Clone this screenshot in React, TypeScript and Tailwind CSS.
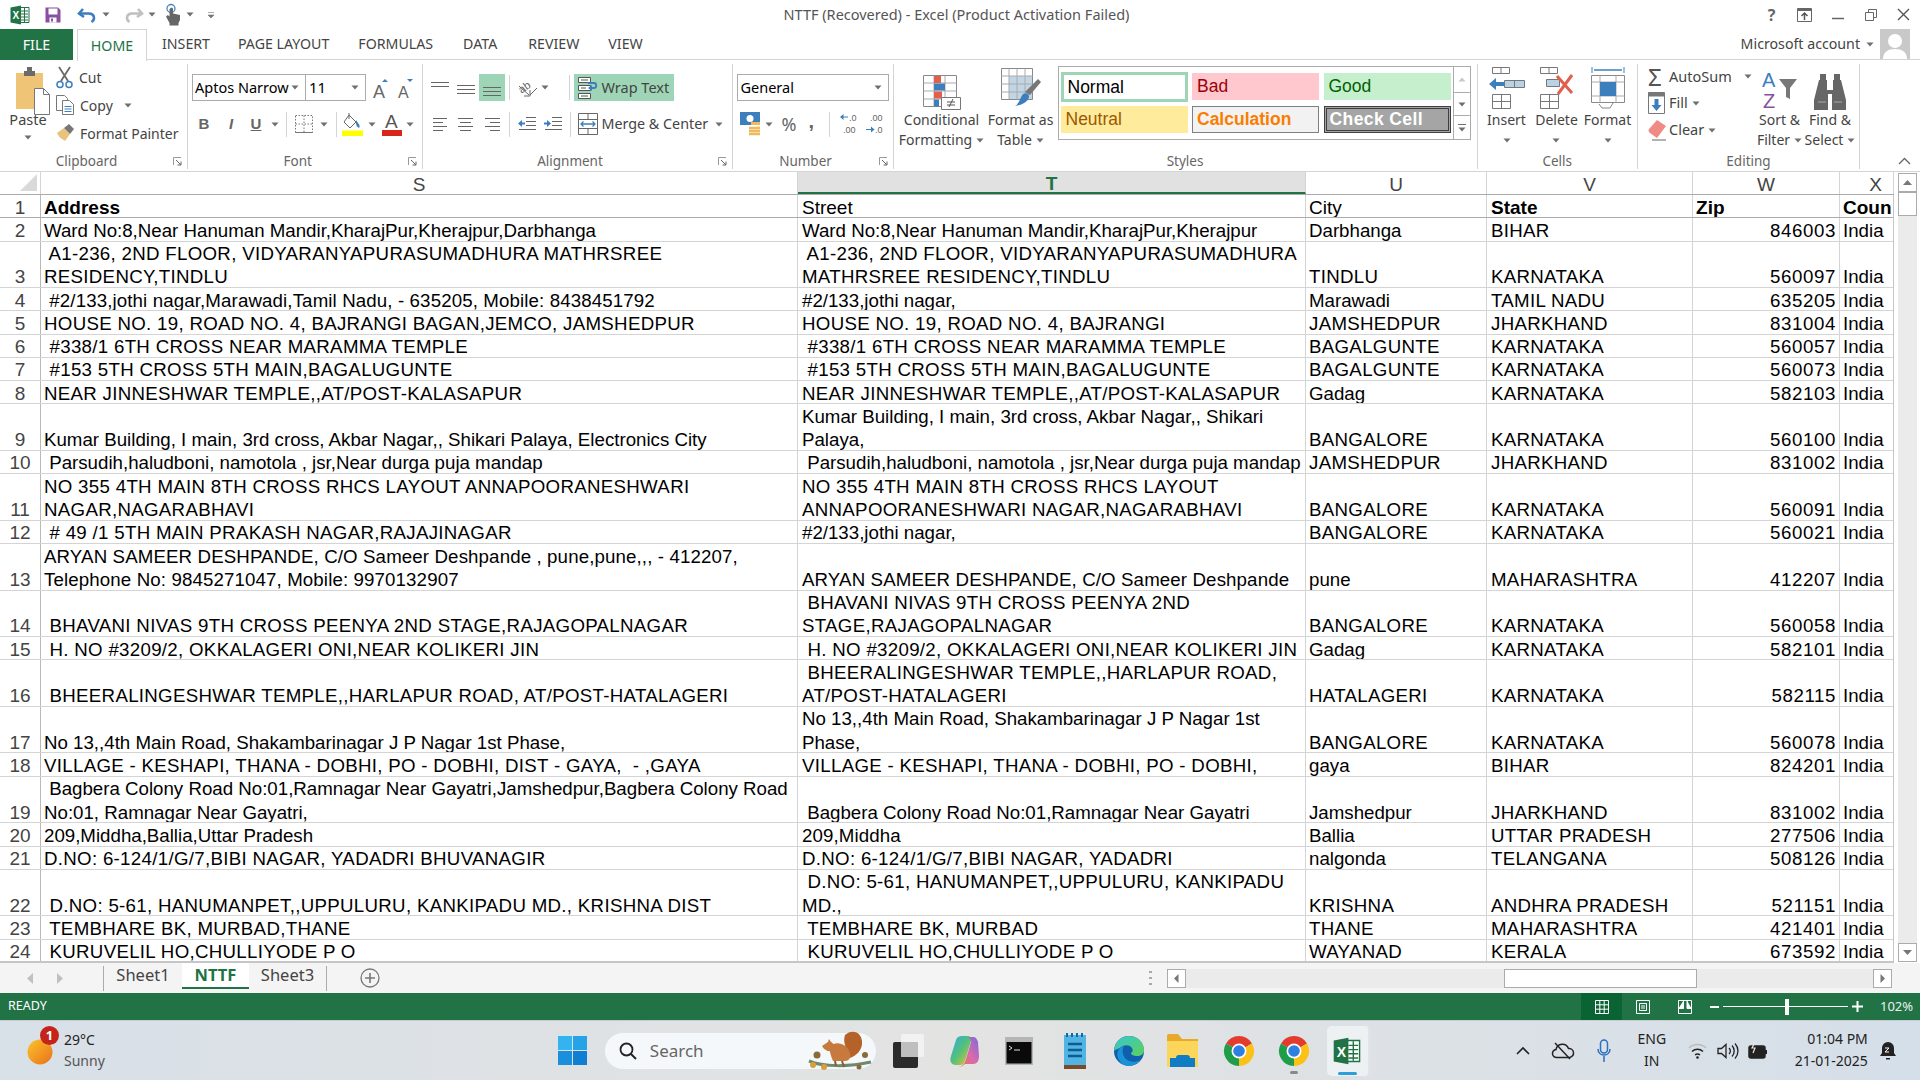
import type { ReactNode } from "react";

const UI = "font-['Noto_Sans',sans-serif]";
const CELL = "font-['Liberation_Sans',Arial,sans-serif]";

const Svg = ({ w, h = w, vb, className = "", children }: { w: number; h?: number; vb?: string; className?: string; children: ReactNode }) => (
  <svg width={w} height={h} viewBox={vb ?? `0 0 ${w} ${h}`} className={`shrink-0 overflow-visible ${className}`} fill="none">
    {children}
  </svg>
);

const Caret = ({ className = "" }: { className?: string }) => (
  <Svg w={8} h={5} className={className}>
    <path d="M0.5 0.5h7L4 4.5z" fill="#6f6f6f" />
  </Svg>
);

const Launcher = () => (
  <Svg w={9} h={9}>
    <path d="M0.5 8V0.5H8" stroke="#999" />
    <path d="M3 3l5 5M8 4.5V8H4.5" stroke="#666" />
  </Svg>
);

const Lines = ({ rows, w = 18, color = "#666" }: { rows: [number, number, number][]; w?: number; color?: string }) => (
  <Svg w={w} h={18}>
    {rows.map(([y, x, l], i) => (
      <path key={i} d={`M${x} ${y + 0.5}h${l}`} stroke={color} />
    ))}
  </Svg>
);

/* ---------- title bar icons ---------- */
const ExcelLogo = ({ size = 20 }: { size?: number }) => (
  <Svg w={size} vb="0 0 20 20">
    <path d="M8 2.5h11v15H8z" fill="#fff" stroke="#217346" />
    <path d="M11 6h7M11 9h7M11 12h7M11 15h7M14.5 3v14" stroke="#217346" />
    <path d="M0.5 2.5L11 .5v19L.5 17.5z" fill="#217346" />
    <text x="2.6" y="14" fontSize="10" fontWeight="700" fill="#fff" fontFamily="Liberation Sans">X</text>
  </Svg>
);
const SaveIcon = () => (
  <Svg w={16}>
    <path d="M.5.5h12.5l2.5 2.5v12.5H.5z" fill="#8a4f9e" />
    <path d="M3.5 1.5h9v6h-9z" fill="#fff" />
    <path d="M4.5 10.5h7v5h-7z" fill="#fff" />
    <path d="M6 11.5h2v3H6z" fill="#8a4f9e" />
  </Svg>
);
const UndoIcon = ({ color, className = "" }: { color: string; className?: string }) => (
  <Svg w={20} h={18} className={className}>
    <path d="M6 3L2 7.5 7 11" stroke={color} strokeWidth="2.6" />
    <path d="M3 7.5h8.5c3.6 0 5.5 2 5.5 4.5 0 1.500-.8 3-2.500 4" stroke={color} strokeWidth="2.6" />
  </Svg>
);
const TouchIcon = () => (
  <Svg w={16} h={22}>
    <circle cx="6" cy="4.500" r="4" stroke="#4a86c0" strokeWidth="1.300" />
    <path d="M4.500 5v7.500L2.800 11 1 12.500l3.500 6.500v2.500h9V19l1.500-3v-5l-7-1.500V5c0-1.800-3-1.800-3 0z" fill="#666" />
  </Svg>
);

/* ---------- clipboard ---------- */
const PasteIcon = () => (
  <Svg w={35} h={48}>
    <path d="M1 6h27v36H1z" fill="#efc477" />
    <path d="M9 4h11v5H9z" fill="#6b6b6b" />
    <path d="M12 0h5v5h-5z" fill="#6b6b6b" />
    <path d="M19.500 21.500h9l6 6v20h-15z" fill="#fff" stroke="#777" />
    <path d="M28.500 21.500v6h6" stroke="#777" />
  </Svg>
);
const CutIcon = () => (
  <Svg w={17} h={23}>
    <path d="M3 1l9 14M14 1L5 15" stroke="#6a6a6a" strokeWidth="1.800" />
    <circle cx="4" cy="18.500" r="3" stroke="#3d7ebd" strokeWidth="1.500" />
    <circle cx="13" cy="18.500" r="3" stroke="#3d7ebd" strokeWidth="1.500" />
  </Svg>
);
const CopyIcon = () => (
  <Svg w={18} h={20}>
    <path d="M.5.5h8l3 3v12H.5z" fill="#fff" stroke="#777" />
    <path d="M6.500 5.500h7l4 4v10h-11z" fill="#fff" stroke="#777" />
    <path d="M8.500 11.500h7M8.500 14h7M8.500 16.500h7" stroke="#3d7ebd" />
  </Svg>
);
const BrushIcon = () => (
  <Svg w={18} h={18}>
    <path d="M1 9l7-5 6 6-5 7c-2-2-5-2-8-8z" fill="#e9c27c" />
    <path d="M8 4l5-4 5 5-4 5z" fill="#777" />
  </Svg>
);

/* ---------- alignment ---------- */
const BordersIcon = () => (
  <Svg w={18}>
    <path d="M.5.5h17v17H.5zM9 .5v17M.5 9h17" stroke="#777" strokeDasharray="1.500 1.500" />
    <path d="M.5 17.500h17" stroke="#777" />
  </Svg>
);
const FillIcon = () => (
  <Svg w={21} h={24}>
    <path d="M7 3l7 7-6 6-6-6z" fill="#fff" stroke="#666" />
    <path d="M7 1v6" stroke="#666" />
    <path d="M14 8l2 3c2 2 2 4 1 5-2-1-3-3-3-5z" fill="#3d7ebd" />
    <path d="M0 18.500h21V24H0z" fill="#ffff00" />
  </Svg>
);
const FontColorIcon = () => (
  <Svg w={20} h={24}>
    <text x="3" y="16" fontSize="19" fontFamily="Liberation Sans" fill="#555">A</text>
    <path d="M0 18h20v6H0z" fill="#d8261c" />
  </Svg>
);
const GrowA = ({ up }: { up: boolean }) => (
  <Svg w={18} h={22}>
    <text x="1" y={21} fontSize={up ? 18 : 16} fontFamily="Liberation Sans" fill="#666">A</text>
    <path d={up ? "M10 5l3-3 3 3z" : "M10 2h6l-3 3z"} fill="#3d7ebd" />
  </Svg>
);
const Orientation = () => (
  <Svg w={20} h={20}>
    <path d="M1 8l10 9M6 18l6 0 0-6" stroke="#666" />
    <text x="1" y="12" fontSize="11" fontFamily="Liberation Sans" fill="#666" transform="rotate(-35 8 10)">ab</text>
    <path d="M12 17l7-7" stroke="#666" />
  </Svg>
);
const Indent = ({ rev }: { rev?: boolean }) => (
  <Svg w={18} h={14}>
    <path d="M8 .5h10M8 4.500h10M8 8.500h10M1 12.500h17" stroke="#666" />
    <path d={rev ? "M0 6.500l4-3.500v2.500h3v2H4V10z" : "M7 6.500L3 3v2.500H0v2h3V10z"} fill="#3d7ebd" />
  </Svg>
);
const WrapIcon = () => (
  <Svg w={20} h={22}>
    <path d="M.5.5h12v5H.5zM.5 8.500h12v5H.5zM.5 16.500h12v5H.5z" fill="#fff" stroke="#555" />
    <path d="M3 3h7M3 11h5M3 19h7" stroke="#555" />
    <path d="M10 6h6c3 0 3 5 0 5h-4" stroke="#3d7ebd" strokeWidth="1.800" />
    <path d="M14 8l-4 3 4 3z" fill="#3d7ebd" />
  </Svg>
);
const MergeIcon = () => (
  <Svg w={20} h={22}>
    <path d="M.5.5h19v21H.5zM.5 6.500h19M.5 15.500h19M10 .5v6M10 15.500v6" stroke="#666" fill="#fff" />
    <path d="M3 11h14M5.500 8.500L3 11l2.500 2.500M14.500 8.500L17 11l-2.500 2.500" stroke="#3d7ebd" strokeWidth="1.300" />
  </Svg>
);

/* ---------- number ---------- */
const MoneyIcon = () => (
  <Svg w={20} h={24}>
    <path d="M0 0h20v13H0z" fill="#3d7ebd" />
    <circle cx="10" cy="6.500" r="3.500" fill="#fff" />
    <path d="M9 16h11M9 19h11M9 22h11" stroke="#efb95c" strokeWidth="2.400" />
    <path d="M11 10h9v3h-9z" fill="#efb95c" />
  </Svg>
);
const DecIcon = ({ rev }: { rev?: boolean }) => (
  <Svg w={17} h={22}>
    {rev ? (
      <>
        <text x="4" y="8" fontSize="9" fontFamily="Liberation Sans" fill="#666">.00</text>
        <text x="9" y="20" fontSize="9" fontFamily="Liberation Sans" fill="#666">.0</text>
        <path d="M0 16h5v-2.500l3.500 3-3.500 3V17H0z" fill="#3d7ebd" />
      </>
    ) : (
      <>
        <text x="9" y="8" fontSize="9" fontFamily="Liberation Sans" fill="#666">.0</text>
        <text x="3" y="20" fontSize="9" fontFamily="Liberation Sans" fill="#666">.00</text>
        <path d="M8 3.500H3.500V1L0 4l3.500 3V4.500H8z" fill="#3d7ebd" />
      </>
    )}
  </Svg>
);

/* ---------- styles ---------- */
const CondFormat = () => (
  <Svg w={38} h={36}>
    <path d="M.5 1.500h33v31H.5z" fill="#fff" stroke="#888" />
    <path d="M11 1.500v31M22 1.500v31M.5 9h33M.5 17h33M.5 25h33" stroke="#aaa" />
    <path d="M11 2h7v7h-7z" fill="#e0604d" />
    <path d="M11 9.500h11v7H11z" fill="#3d7ebd" />
    <path d="M11 17.500h8v7h-8z" fill="#e0604d" />
    <path d="M11 25.500h5v7h-5z" fill="#3d7ebd" />
    <path d="M18.500 23.500h19v12h-19z" fill="#fff" stroke="#777" />
    <path d="M24 31h8M24 28h8M26 33l4-8" stroke="#555" />
  </Svg>
);
const FormatTable = () => (
  <Svg w={40} h={42}>
    <path d="M.5.5h31v31H.5z" fill="#fff" stroke="#888" />
    <path d="M8 8h23v23H8z" fill="#c0d6e6" />
    <path d="M8 .5v31M16 .5v31M24 .5v31M.5 8h31M.5 16h31M.5 24h31" stroke="#aaa" />
    <path d="M37 11l3 3-11 13-5-3z" fill="#777" />
    <path d="M22 26c4-2 6 0 6 3-1 5-7 8-14 9 4-2 5-8 8-12z" fill="#3d7ebd" />
  </Svg>
);

/* ---------- cells / editing ---------- */
const InsertIcon = () => (
  <Svg w={36} h={44}>
    <path d="M3.500 1.500h17v6h-17zM12 1.500v6" stroke="#777" />
    <path d="M16.500 14.500h20v7h-20zM26.500 14.500v7" transform="translate(-1 0)" fill="#b9d3e6" stroke="#777" />
    <path d="M0 18l7-6v4h8v4H7v4z" fill="#3d7ebd" />
    <path d="M3.500 28.500h18v14h-18zM12.500 28.500v14M3.500 35.500h18" stroke="#777" />
  </Svg>
);
const DeleteIcon = () => (
  <Svg w={36} h={44}>
    <path d="M1.500 1.500h17v6h-17zM10 1.500v6" stroke="#777" />
    <path d="M7.500 13.500h13v7h-13z" fill="#b9d3e6" stroke="#777" />
    <path d="M18 10l15 17M33 9L19 28" stroke="#e0604d" strokeWidth="3" />
    <path d="M1.500 28.500h18v14h-18zM10.500 28.500v14M1.500 35.500h18" stroke="#777" />
  </Svg>
);
const FormatIcon = () => (
  <Svg w={34} h={44}>
    <path d="M1 1v6M33 1v6" stroke="#3d7ebd" />
    <path d="M3 4h28" stroke="#3d7ebd" strokeWidth="1.500" />
    <path d="M.5 9.500h33v27H.5z" fill="#fff" stroke="#888" />
    <path d="M9 9.500v27M25 9.500v27M.5 16h33M.5 30h33" stroke="#aaa" />
    <path d="M9 16h16v14H9z" fill="#3d7ebd" />
    <path d="M8 38l3 4h8l3-5" stroke="#888" />
  </Svg>
);
const SortFilter = () => (
  <Svg w={36} h={40}>
    <text x="0" y="17" fontSize="20" fontFamily="Liberation Sans" fill="#3d7ebd">A</text>
    <text x="1" y="38" fontSize="20" fontFamily="Liberation Sans" fill="#8a4f9e">Z</text>
    <path d="M17 9h18l-7 9v11l-4-2v-9z" fill="#777" />
  </Svg>
);
const Binoculars = () => (
  <Svg w={34} h={36}>
    <path d="M7 0h6v6h1v10h6V6h1V0h6v6h1l5 20v10H19V20h-4v16H1V26L6 6h1z" fill="#666" />
    <path d="M5 28h8M21 28h8" stroke="#aaa" />
  </Svg>
);
const ClearIcon = () => (
  <Svg w={20} h={22}>
    <path d="M9 1l9 6-9 12-7-5c-2-2-2-3 0-5z" fill="#ef8a85" />
    <path d="M4 21h14" stroke="#666" />
  </Svg>
);
const FillDown = () => (
  <Svg w={17} h={22}>
    <path d="M.5.5h16v21H.5z" fill="#fff" stroke="#777" />
    <path d="M.5.5h16v4H.5z" fill="#777" />
    <path d="M6.500 7h4v6h3l-5 6-5-6h3z" fill="#3d7ebd" />
  </Svg>
);

/* ---------- status / taskbar ---------- */
const SunIcon = () => (
  <Svg w={26} h={26}>
    <defs>
      <linearGradient id="sun" x1="0" y1="0" x2="1" y2="1">
        <stop offset="0" stopColor="#fbc42c" />
        <stop offset="1" stopColor="#e9701a" />
      </linearGradient>
    </defs>
    <circle cx="13" cy="13" r="12.500" fill="url(#sun)" />
  </Svg>
);
const WinLogo = () => (
  <Svg w={29}>
    <path d="M0 0h14v14H0z" fill="#33b4ee" />
    <path d="M15 0h14v14H15z" fill="#25a3e6" />
    <path d="M0 15h14v14H0z" fill="#1a8fdc" />
    <path d="M15 15h14v14H15z" fill="#0f7fd3" />
  </Svg>
);
const Squirrel = () => (
  <Svg w={64} h={40}>
    <path d="M0 30c14 6 40 6 62 1" stroke="#6e8a6a" strokeWidth="3" />
    <path d="M36 4c6-6 16-4 17 6 1 9-6 15-12 17-2-8-8-14-5-23z" fill="#b5622a" />
    <path d="M20 16c6-7 18-4 21 6 1 5-1 8-5 8H24c-2-4-3-9-4-14z" fill="#c77a3d" />
    <path d="M13 15l6-4 1-3 2 3c3 1 4 6 1 9-4 1-8-1-10-5z" fill="#c77a3d" />
    <path d="M26 30l1 5M33 30l2 6" stroke="#8a5a33" strokeWidth="2" />
    <circle cx="8" cy="24" r="3.500" fill="#8a6a3a" />
    <circle cx="4" cy="34" r="3" fill="#d8a03c" />
    <circle cx="15" cy="36" r="3" fill="#d8a03c" />
    <circle cx="56" cy="24" r="3" fill="#8a6a3a" />
    <circle cx="50" cy="36" r="2.500" fill="#8a6a3a" />
  </Svg>
);
const TaskView = () => (
  <Svg w={32} h={34}>
    <path d="M0 10a2 2 0 012-2h21a2 2 0 012 2v22a2 2 0 01-2 2H2a2 2 0 01-2-2z" fill="#2b2b2b" />
    <rect x="8" y="0" width="23" height="23" rx="2" fill="#f4f4f4" fillOpacity="0.85" />
    <rect x="8" y="8" width="17" height="15" fill="#bdbdbd" fillOpacity="0.9" />
  </Svg>
);
const Copilot = () => (
  <Svg w={30} h={34}>
    <defs>
      <linearGradient id="cpA" x1="0" y1="0" x2="1" y2="1">
        <stop offset="0" stopColor="#2fa8e6" />
        <stop offset="0.5" stopColor="#53c17a" />
        <stop offset="1" stopColor="#f6c12c" />
      </linearGradient>
      <linearGradient id="cpB" x1="1" y1="0" x2="0" y2="1">
        <stop offset="0" stopColor="#7a6ad8" />
        <stop offset="0.5" stopColor="#d76bb0" />
        <stop offset="1" stopColor="#f2703c" />
      </linearGradient>
    </defs>
    <path d="M12 2c-3 0-5 1-6 4L1 22c-2 6 1 9 5 9h4c3 0 4-2 5-4l6-20c1-3-1-5-4-5z" fill="url(#cpA)" />
    <path d="M18 3h5c3 0 4 2 5 5l1 14c0 5-2 8-6 8h-8c-2 2-4 3-6 3 4-1 6-4 7-8l5-17c0-2-1-4-3-5z" fill="url(#cpB)" />
  </Svg>
);
const Terminal = () => (
  <Svg w={28} h={28}>
    <path d="M0 0h28v28H0z" fill="#b5b5b5" />
    <path d="M1.500 5h25v21.500h-25z" fill="#0a0a0a" />
    <path d="M4 9l3 2-3 2M9 13h6" stroke="#ddd" strokeWidth="1" />
  </Svg>
);
const Notepad = () => (
  <Svg w={22} h={36}>
    <path d="M0 2h22v30H0z" fill="#52b4e2" />
    <path d="M0 32h22v4H0z" fill="#7a4a2a" />
    <path d="M3 0v4M8 0v4M13 0v4M18 0v4" stroke="#0f6ba8" strokeWidth="2" />
    <path d="M4 11h14M4 17h14M4 23h14" stroke="#0d5d92" strokeWidth="2.500" />
  </Svg>
);
const Edge = () => (
  <Svg w={30} h={36} vb="0 0 30 30">
    <defs>
      <linearGradient id="edA" x1="0" y1="0" x2="1" y2="1">
        <stop offset="0" stopColor="#37c6d0" />
        <stop offset="1" stopColor="#5ed15a" />
      </linearGradient>
    </defs>
    <circle cx="15" cy="15" r="15" fill="#0f5fae" />
    <path d="M0 15C1 5 8 0 15 0c9 0 15 6 15 14 0 4-3 6-7 6-3 0-6-1-6-3 2-1 2-3 1-5-3-4-9-3-12 0-3 1-5 2-6 3z" fill="url(#edA)" />
    <path d="M4 22c-2-6 1-11 6-12-2 3-2 9 2 13 3 3 9 4 14 1-3 4-7 6-11 6-5 0-9-3-11-8z" fill="#1a93d6" />
  </Svg>
);
const Folder = () => (
  <Svg w={31} h={33}>
    <path d="M0 2a2 2 0 012-2h9l4 5h16v28H0z" fill="#e8a82a" />
    <path d="M0 7h31v26H0z" fill="#fbd65a" />
    <path d="M9 24c0-2 1-3 3-3h8c2 0 3 1 3 3h5v9H3v-9z" fill="#0f7cc4" />
  </Svg>
);
const Chrome = ({ size = 30 }: { size?: number }) => (
  <Svg w={size} vb="0 0 30 30">
    <path d="M15 15L2 7.500A15 15 0 0128 7.500z" fill="#e33b2e" />
    <path d="M15 15L28 7.500A15 15 0 0115 30z" fill="#fbc116" />
    <path d="M15 15L15 30A15 15 0 012 7.500z" fill="#1e9e4a" />
    <circle cx="15" cy="15" r="7.500" fill="#fff" />
    <circle cx="15" cy="15" r="5.800" fill="#2f7fe3" />
  </Svg>
);

/* ---------- sheet data ---------- */
const rows: string[][] = [
  ["1", "Address", "Street", "City", "State", "Zip", "Coun"],
  ["2", "Ward No:8,Near Hanuman Mandir,KharajPur,Kherajpur,Darbhanga", "Ward No:8,Near Hanuman Mandir,KharajPur,Kherajpur", "Darbhanga", "BIHAR", "846003", "India"],
  ["3", " A1-236, 2ND FLOOR, VIDYARANYAPURASUMADHURA MATHRSREE\nRESIDENCY,TINDLU", " A1-236, 2ND FLOOR, VIDYARANYAPURASUMADHURA\nMATHRSREE RESIDENCY,TINDLU", "TINDLU", "KARNATAKA", "560097", "India"],
  ["4", " #2/133,jothi nagar,Marawadi,Tamil Nadu, - 635205, Mobile: 8438451792", "#2/133,jothi nagar,", "Marawadi", "TAMIL NADU", "635205", "India"],
  ["5", "HOUSE NO. 19, ROAD NO. 4, BAJRANGI BAGAN,JEMCO, JAMSHEDPUR", "HOUSE NO. 19, ROAD NO. 4, BAJRANGI", "JAMSHEDPUR", "JHARKHAND", "831004", "India"],
  ["6", " #338/1 6TH CROSS NEAR MARAMMA TEMPLE", " #338/1 6TH CROSS NEAR MARAMMA TEMPLE", "BAGALGUNTE", "KARNATAKA", "560057", "India"],
  ["7", " #153 5TH CROSS 5TH MAIN,BAGALUGUNTE", " #153 5TH CROSS 5TH MAIN,BAGALUGUNTE", "BAGALGUNTE", "KARNATAKA", "560073", "India"],
  ["8", "NEAR JINNESHWAR TEMPLE,,AT/POST-KALASAPUR", "NEAR JINNESHWAR TEMPLE,,AT/POST-KALASAPUR", "Gadag", "KARNATAKA", "582103", "India"],
  ["9", "Kumar Building, I main, 3rd cross, Akbar Nagar,, Shikari Palaya, Electronics City", "Kumar Building, I main, 3rd cross, Akbar Nagar,, Shikari\nPalaya,", "BANGALORE", "KARNATAKA", "560100", "India"],
  ["10", " Parsudih,haludboni, namotola , jsr,Near durga puja mandap", " Parsudih,haludboni, namotola , jsr,Near durga puja mandap", "JAMSHEDPUR", "JHARKHAND", "831002", "India"],
  ["11", "NO 355 4TH MAIN 8TH CROSS RHCS LAYOUT ANNAPOORANESHWARI\nNAGAR,NAGARABHAVI", "NO 355 4TH MAIN 8TH CROSS RHCS LAYOUT\nANNAPOORANESHWARI NAGAR,NAGARABHAVI", "BANGALORE", "KARNATAKA", "560091", "India"],
  ["12", " # 49 /1 5TH MAIN PRAKASH NAGAR,RAJAJINAGAR", "#2/133,jothi nagar,", "BANGALORE", "KARNATAKA", "560021", "India"],
  ["13", "ARYAN SAMEER DESHPANDE, C/O Sameer Deshpande , pune,pune,,, - 412207,\nTelephone No: 9845271047, Mobile: 9970132907", "ARYAN SAMEER DESHPANDE, C/O Sameer Deshpande", "pune", "MAHARASHTRA", "412207", "India"],
  ["14", " BHAVANI NIVAS 9TH CROSS PEENYA 2ND STAGE,RAJAGOPALNAGAR", " BHAVANI NIVAS 9TH CROSS PEENYA 2ND\nSTAGE,RAJAGOPALNAGAR", "BANGALORE", "KARNATAKA", "560058", "India"],
  ["15", " H. NO #3209/2, OKKALAGERI ONI,NEAR KOLIKERI JIN", " H. NO #3209/2, OKKALAGERI ONI,NEAR KOLIKERI JIN", "Gadag", "KARNATAKA", "582101", "India"],
  ["16", " BHEERALINGESHWAR TEMPLE,,HARLAPUR ROAD, AT/POST-HATALAGERI", " BHEERALINGESHWAR TEMPLE,,HARLAPUR ROAD,\nAT/POST-HATALAGERI", "HATALAGERI", "KARNATAKA", "582115", "India"],
  ["17", "No 13,,4th Main Road, Shakambarinagar J P Nagar 1st Phase,", "No 13,,4th Main Road, Shakambarinagar J P Nagar 1st\nPhase,", "BANGALORE", "KARNATAKA", "560078", "India"],
  ["18", "VILLAGE - KESHAPI, THANA - DOBHI, PO - DOBHI, DIST - GAYA,  - ,GAYA", "VILLAGE - KESHAPI, THANA - DOBHI, PO - DOBHI,", "gaya", "BIHAR", "824201", "India"],
  ["19", " Bagbera Colony Road No:01,Ramnagar Near Gayatri,Jamshedpur,Bagbera Colony Road\nNo:01, Ramnagar Near Gayatri,", " Bagbera Colony Road No:01,Ramnagar Near Gayatri", "Jamshedpur", "JHARKHAND", "831002", "India"],
  ["20", "209,Middha,Ballia,Uttar Pradesh", "209,Middha", "Ballia", "UTTAR PRADESH", "277506", "India"],
  ["21", "D.NO: 6-124/1/G/7,BIBI NAGAR, YADADRI BHUVANAGIR", "D.NO: 6-124/1/G/7,BIBI NAGAR, YADADRI", "nalgonda", "TELANGANA", "508126", "India"],
  ["22", " D.NO: 5-61, HANUMANPET,,UPPULURU, KANKIPADU MD., KRISHNA DIST", " D.NO: 5-61, HANUMANPET,,UPPULURU, KANKIPADU\nMD.,", "KRISHNA", "ANDHRA PRADESH", "521151", "India"],
  ["23", " TEMBHARE BK, MURBAD,THANE", " TEMBHARE BK, MURBAD", "THANE", "MAHARASHTRA", "421401", "India"],
  ["24", " KURUVELIL HO,CHULLIYODE P O", " KURUVELIL HO,CHULLIYODE P O", "WAYANAD", "KERALA", "673592", "India"],
];

// caps and digits came out wider than lowercase in the picture
const tracking = (line: string) => {
  const t = line.replace(/\s/g, "");
  if (/^\d+$/.test(t)) return "tracking-[0.6px]";
  const upper = (t.match(/[A-Z0-9]/g) ?? []).length / (t.length || 1);
  if (upper > 0.7) return "tracking-[0.3px]";
  if (upper > 0.3) return "tracking-[0.12px]";
  return "";
};

const Cell = ({ width, text, className = "" }: { width: string; text: string; className?: string }) => (
  <div className={`${width} shrink-0 flex items-end overflow-hidden border-r border-[#d4d4d4] px-[3px] whitespace-pre ${className}`}>
    <div className="-mb-[1.500px]">
      {text.split("\n").map((line, i) => (
        <div key={i} className={tracking(line)}>{line}</div>
      ))}
    </div>
  </div>
);

const SheetRow = ({ row }: { row: string[] }) => {
  const [num, s, t, u, v, w, x] = row;
  const tall = s.includes("\n") || t.includes("\n");
  const head = num === "1";
  const bold = head ? "font-bold" : "";
  return (
    <div className={`flex shrink-0 border-b ${head ? "border-[#ababab] text-[19px]" : "border-[#d4d4d4]"} ${tall ? "h-[46.55px]" : "h-[23.27px]"}`}>
      <div className="w-[41px] shrink-0 flex items-end justify-center overflow-hidden border-r border-[#b9b9b9] text-[19px] text-[#444]">
        <span className="-mb-[1.500px]">{num}</span>
      </div>
      <Cell width="w-[757px]" className={bold} text={s} />
      <Cell width="w-[508px]" className="pl-[4px]" text={t} />
      <Cell width="w-[181px]" text={u} />
      <Cell width="w-[206px]" className={`pl-[4px] ${bold}`} text={v} />
      <Cell width={`w-[147px] ${head ? "" : "justify-end"}`} className={bold} text={w} />
      <Cell width="w-[54px]" className={bold} text={x} />
    </div>
  );
};

const ColHead = ({ width, label, active, className = "" }: { width: string; label: string; active?: boolean; className?: string }) => (
  <div
    className={`${width} shrink-0 flex items-center justify-center pt-[3px] border-r border-[#d4d4d4] ${className} ${
      active ? "bg-[#e1e1e1] text-[#217346] font-bold border-b-2 border-b-[#217346]" : "text-[#444]"
    }`}
  >
    {label}
  </div>
);

/* ---------- ribbon bits ---------- */
const Group = ({ width, label, launcher, children }: { width: string; label: string; launcher?: boolean; children: ReactNode }) => (
  <div className={`${width} shrink-0 flex flex-col h-[105px] mt-[4px] border-r border-[#d4d4d4]`}>
    <div className="flex-1 min-h-0">{children}</div>
    <div className="h-[16px] flex items-center text-[#666] text-[13.5px]">
      <span className="flex-1 text-center">{label}</span>
      {launcher ? <span className="mr-[5px] flex"><Launcher /></span> : null}
    </div>
  </div>
);

const BigButton = ({ width, icon, lines, className = "" }: { width: string; icon: ReactNode; lines: ReactNode[]; className?: string }) => (
  <div className={`${width} shrink-0 flex flex-col items-center ${className}`}>
    <div className="h-[44px] flex items-end justify-center">{icon}</div>
    <div className="text-[14px] leading-[20px] text-center whitespace-nowrap text-[#444]">
      {lines.map((l, i) => (
        <div key={i} className="flex items-center justify-center gap-[4px] h-[20px]">{l}</div>
      ))}
    </div>
  </div>
);

const VSep = ({ h = "h-[25px]", className = "" }: { h?: string; className?: string }) => <span className={`w-px ${h} bg-[#d4d4d4] shrink-0 ${className}`} />;

const Ribbon = () => (
  <div className={`h-[112px] flex border-b border-[#d4d4d4] text-[#444] ${UI}`}>
    <Group width="w-[188px]" label="Clipboard" launcher>
      <div className="flex pt-[3px]">
        <div className="w-[56px] flex flex-col items-center">
          <span className="ml-[8px] flex"><PasteIcon /></span>
          <span className="text-[14.5px] leading-[20px] -mt-[6px]">Paste</span>
          <Caret className="mt-[6px]" />
        </div>
        <div className="flex flex-col text-[14px] -mt-[4px]">
          <div className="h-[28px] flex items-center gap-[6px]"><CutIcon /><span>Cut</span></div>
          <div className="h-[28px] flex items-center gap-[6px]"><CopyIcon /><span>Copy</span><Caret className="ml-[5px]" /></div>
          <div className="h-[28px] flex items-center gap-[6px]"><BrushIcon /><span>Format Painter</span></div>
        </div>
      </div>
    </Group>

    <Group width="w-[234.500px]" label="Font" launcher>
      <div className="pt-[10px] pl-[4px]">
        <div className="flex items-center">
          <div className="w-[114px] h-[27px] flex items-center justify-between border border-[#ababab] pl-[2px] pr-[6px] text-[14.5px] text-black whitespace-nowrap">
            <span>Aptos Narrow</span><Caret />
          </div>
          <div className="w-[60px] h-[27px] flex items-center justify-between border border-l-0 border-[#ababab] pl-[3px] pr-[6px] text-[15px] text-black">
            <span>11</span><Caret />
          </div>
          <span className="ml-[6px] flex"><GrowA up /></span>
          <span className="ml-[7px] flex"><GrowA up={false} /></span>
        </div>
        <div className="flex items-center h-[26px] mt-[10px] text-[#666]">
          <span className={`w-[24px] text-center font-bold text-[15px] ${CELL}`}>B</span>
          <span className={`w-[24px] ml-[3px] text-center italic font-bold text-[15px] ${CELL}`}>I</span>
          <span className={`w-[22px] ml-[2px] text-center underline font-bold text-[15px] ${CELL}`}>U</span>
          <Caret className="ml-[4px]" />
          <VSep className="ml-[7px]" />
          <span className="ml-[8px] flex"><BordersIcon /></span>
          <Caret className="ml-[7px]" />
          <VSep className="ml-[8px]" />
          <span className="ml-[5px] flex"><FillIcon /></span>
          <Caret className="ml-[5px]" />
          <span className="ml-[6px] flex"><FontColorIcon /></span>
          <Caret className="ml-[4px]" />
        </div>
      </div>
    </Group>

    <Group width="w-[310px]" label="Alignment" launcher>
      <div className="pt-[10px]">
        <div className="flex items-center h-[27px]">
          <span className="ml-[8px] flex"><Lines rows={[[3, 0, 18], [7, 0, 18]]} /></span>
          <span className="ml-[8px] flex"><Lines rows={[[6, 0, 18], [10, 0, 18], [14, 0, 18]]} /></span>
          <span className="ml-[4px] w-[26px] h-[27px] bg-[#9fd5b7] flex items-center justify-center"><Lines rows={[[8, 0, 18], [12, 0, 18], [16, 0, 18]]} w={18} /></span>
          <VSep className="ml-[4px]" />
          <span className="ml-[8px] flex"><Orientation /></span>
          <Caret className="ml-[3px]" />
          <VSep className="ml-[20px]" />
          <div className="ml-[4px] w-[100px] h-[27px] bg-[#9fd5b7] flex items-center gap-[4px] pl-[4px] text-[14.5px] whitespace-nowrap"><WrapIcon /><span>Wrap Text</span></div>
        </div>
        <div className="flex items-center h-[26px] mt-[10px]">
          <span className="ml-[10px] flex"><Lines rows={[[3, 0, 14], [7, 0, 10], [11, 0, 14], [15, 0, 10]]} w={15} /></span>
          <span className="ml-[10px] flex"><Lines rows={[[3, 0, 15], [7, 2, 11], [11, 0, 15], [15, 2, 11]]} w={15} /></span>
          <span className="ml-[12px] flex"><Lines rows={[[3, 0, 15], [7, 5, 10], [11, 0, 15], [15, 5, 10]]} w={15} /></span>
          <VSep className="ml-[9px]" />
          <span className="ml-[8px] flex"><Indent rev /></span>
          <span className="ml-[8px] flex"><Indent /></span>
          <VSep className="ml-[8px]" />
          <span className="ml-[7px] flex"><MergeIcon /></span>
          <span className="ml-[4px] text-[14.3px] whitespace-nowrap">Merge &amp; Center</span>
          <Caret className="ml-[7px]" />
        </div>
      </div>
    </Group>

    <Group width="w-[161px]" label="Number" launcher>
      <div className="pt-[10px] pl-[4px]">
        <div className="w-[152px] h-[27px] flex items-center justify-between border border-[#ababab] pl-[3px] pr-[6px] text-[14.5px] text-black">
          <span>General</span><Caret />
        </div>
        <div className="flex items-center h-[26px] mt-[10px]">
          <span className="ml-[3px] flex"><MoneyIcon /></span>
          <Caret className="ml-[5px]" />
          <span className="ml-[9px] text-[18px] text-[#666]">%</span>
          <span className={`ml-[12px] text-[20px] font-bold text-[#666] leading-none -mt-[6px] ${CELL}`}>,</span>
          <VSep className="ml-[15px]" />
          <span className="ml-[10px] flex"><DecIcon /></span>
          <span className="ml-[9px] flex"><DecIcon rev /></span>
        </div>
      </div>
    </Group>

    <Group width="w-[584px]" label="Styles">
      <div className="flex items-start pt-[2px]">
        <BigButton width="w-[84px] ml-[6px]" icon={<CondFormat />} lines={["Conditional", <>Formatting <Caret /></>]} />
        <BigButton width="w-[74px]" icon={<FormatTable />} lines={["Format as", <>Table <Caret /></>]} />
        <div className="w-[413px] h-[74px] flex border border-[#ababab]">
          <div className={`w-[394px] grid grid-cols-[127px_127px_127px] gap-x-[4.500px] gap-y-[4px] pl-[2px] pt-[6px] content-start ${CELL} text-[17.500px]`}>
            <div className="h-[30px] -mt-[1px] border-[3px] border-[#9fd5b7] flex items-center pl-[4px] text-black">Normal</div>
            <div className="h-[27px] bg-[#ffc7ce] flex items-center pl-[5px] text-[#9c0006]">Bad</div>
            <div className="h-[27px] bg-[#c6efce] flex items-center pl-[5px] text-[#006100]">Good</div>
            <div className="h-[27px] bg-[#ffeb9c] flex items-center pl-[5px] text-[#9c5700]">Neutral</div>
            <div className="h-[27px] bg-[#f2f2f2] border border-[#7f7f7f] flex items-center pl-[4px] font-bold text-[#fa7d00]">Calculation</div>
            <div className="h-[27px] bg-[#a5a5a5] border-[3px] border-double border-[#3f3f3f] flex items-center pl-[3px] font-bold text-white tracking-[0.4px]">Check Cell</div>
          </div>
          <div className="flex-1 flex flex-col border-l border-[#ababab]">
            <div className="h-[26px] flex items-center justify-center border-b border-[#ababab]"><Svg w={8} h={5}><path d="M0.5 4.500h7L4 .5z" fill="#c8c8c8" /></Svg></div>
            <div className="h-[23px] flex items-center justify-center border-b border-[#ababab]"><Caret /></div>
            <div className="flex-1 flex flex-col items-center justify-center gap-[2px]"><span className="w-[8px] h-px bg-[#6f6f6f]" /><Caret /></div>
          </div>
        </div>
      </div>
    </Group>

    <Group width="w-[160.500px]" label="Cells">
      <div className="flex pt-[2px] pl-[4px]">
        <BigButton width="w-[50px]" icon={<InsertIcon />} lines={["Insert", <Caret />]} />
        <BigButton width="w-[50px]" icon={<DeleteIcon />} lines={["Delete", <Caret />]} />
        <BigButton width="w-[52px]" icon={<FormatIcon />} lines={["Format", <Caret />]} />
      </div>
    </Group>

    <Group width="w-[222px]" label="Editing">
      <div className="flex">
        <div className="w-[114px] pl-[10px] flex flex-col text-[14.5px] -mt-[1px]">
          <div className="h-[27px] flex items-center"><span className="w-[21px] flex text-[24px] leading-none text-[#555]">Σ</span><span>AutoSum</span><Caret className="ml-[12px]" /></div>
          <div className="h-[26px] flex items-center"><span className="w-[21px] flex"><FillDown /></span><span>Fill</span><Caret className="ml-[4px]" /></div>
          <div className="h-[28px] flex items-center"><span className="w-[21px] flex"><ClearIcon /></span><span>Clear</span><Caret className="ml-[4px]" /></div>
        </div>
        <BigButton width="w-[55px]" className="pt-[2px]" icon={<SortFilter />} lines={["Sort &", <>Filter <Caret /></>]} />
        <BigButton width="w-[52px]" className="-ml-[3px] pt-[2px]" icon={<Binoculars />} lines={["Find &", <>Select <Caret /></>]} />
      </div>
    </Group>

    <div className="flex-1 flex items-end justify-end pb-[6px] pr-[9px]">
      <Svg w={13} h={8}><path d="M1 7l5.500-5.500L12 7" stroke="#666" strokeWidth="1.300" /></Svg>
    </div>
  </div>
);

const ScrollBtn = ({ d, className = "" }: { d: string; className?: string }) => (
  <div className={`w-[19px] h-[19px] flex items-center justify-center border border-[#ababab] bg-white shrink-0 ${className}`}>
    <Svg w={9} h={9}><path d={d} fill="#777" /></Svg>
  </div>
);

export default function App() {
  return (
    <div className={`w-[1920px] h-[1080px] flex flex-col overflow-hidden bg-white ${UI}`}>
      {/* Title bar */}
      <div className="h-[29px] flex items-center shrink-0 text-[#444]">
        <span className="ml-[10px] flex"><ExcelLogo /></span>
        <span className="ml-[15px] flex"><SaveIcon /></span>
        <span className="ml-[16px] flex"><UndoIcon color="#3d7ebd" /></span>
        <Caret className="ml-[5px]" />
        <span className="ml-[14px] flex"><UndoIcon color="#c0c0c0" className="-scale-x-100" /></span>
        <Caret className="ml-[4px]" />
        <span className="ml-[9px] flex"><TouchIcon /></span>
        <Caret className="ml-[5px]" />
        <Svg w={8} h={8} className="ml-[13px]"><path d="M1 1.500h6M1 4h6l-3 3z" fill="#777" stroke="#777" strokeWidth=".6" /></Svg>
        <div className="flex-1 text-center text-[14.500px] pr-[57px] text-[#555]">NTTF (Recovered) - Excel (Product Activation Failed)</div>
        <div className="flex items-center text-[#666]">
          <span className="w-[33px] text-center font-bold text-[16px]">?</span>
          <span className="w-[33px] flex justify-center">
            <Svg w={15} h={14}><path d="M.5.5h14v13H.5z" stroke="#666" /><path d="M.5 2h14" stroke="#666" strokeWidth="2" /><path d="M7.500 12V5M4.500 8l3-3 3 3" stroke="#555" strokeWidth="1.500" /></Svg>
          </span>
          <span className="w-[33px] flex justify-center"><Svg w={12} h={12}><path d="M0 9.500h12" stroke="#666" strokeWidth="1.500" /></Svg></span>
          <span className="w-[33px] flex justify-center"><Svg w={12} h={12}><path d="M3.500 3V.5h8v8H9M.5 3.500h8v8h-8z" stroke="#666" /></Svg></span>
          <span className="w-[33px] flex justify-center"><Svg w={13} h={13}><path d="M1 1l11 11M12 1L1 12" stroke="#555" strokeWidth="1.400" /></Svg></span>
        </div>
      </div>

      {/* Tab row */}
      <div className="h-[31px] flex items-stretch shrink-0 text-[#444] text-[14.2px]">
        <div className="w-[73px] bg-[#217346] text-white flex items-center justify-center">FILE</div>
        <div className="ml-[4px] w-[70px] -mb-px relative z-10 bg-white border border-b-0 border-[#d4d4d4] text-[#217346] flex items-center justify-center">HOME</div>
        <div className="flex-1 flex items-center border-b border-[#d4d4d4]">
          <span className="ml-[15px]">INSERT</span>
          <span className="ml-[28px]">PAGE LAYOUT</span>
          <span className="ml-[29px]">FORMULAS</span>
          <span className="ml-[30px]">DATA</span>
          <span className="ml-[31px]">REVIEW</span>
          <span className="ml-[29px]">VIEW</span>
          <span className="ml-auto">Microsoft account</span>
          <Caret className="ml-[6px]" />
          <div className="ml-[6px] mr-[10px] w-[30px] h-[30px] bg-[#c9c9c9] flex items-end justify-center overflow-hidden">
            <Svg w={26} h={28}>
              <circle cx="13" cy="10" r="7" fill="#fff" />
              <path d="M1 28c0-7 5-10 12-10s12 3 12 10z" fill="#fff" />
            </Svg>
          </div>
        </div>
      </div>

      <Ribbon />

      {/* Sheet */}
      <div className={`h-[791px] flex shrink-0 ${CELL} text-[18.700px] leading-[23.27px] text-black`}>
        <div className="w-[1894px] flex flex-col">
          <div className="h-[23px] flex shrink-0 border-b border-[#ababab] text-[19px]">
            <div className="w-[41px] shrink-0 flex items-end justify-end border-r border-[#d4d4d4] pr-[3px] pb-[3px]">
              <Svg w={17} h={17}><path d="M17 0v17H0z" fill="#d9d9d9" /></Svg>
            </div>
            <ColHead width="w-[757px]" label="S" />
            <ColHead width="w-[508px]" label="T" active />
            <ColHead width="w-[181px]" label="U" />
            <ColHead width="w-[206px]" label="V" />
            <ColHead width="w-[147px]" label="W" />
            <ColHead width="w-[54px]" label="X" className="pl-[18px]" />
          </div>
          <div className="flex-1 flex flex-col border-r border-[#c6c6c6] border-b-2 border-b-[#c6c6c6] overflow-hidden">
            {rows.map((r) => (
              <SheetRow key={r[0]} row={r} />
            ))}
          </div>
        </div>
        <div className="flex-1 flex flex-col pl-[4px] pr-[3px] py-[1px]">
          <ScrollBtn d="M0 7l4.500-5L9 7z" />
          <div className="h-[24px] border border-[#ababab] bg-white" />
          <div className="flex-1 bg-[#ebebeb]" />
          <ScrollBtn d="M0 2l4.500 5L9 2z" />
        </div>
      </div>

      {/* Sheet tabs */}
      <div className="h-[30px] shrink-0 flex items-center bg-[#f4f4f4] text-[#444] text-[16.5px]">
        <span className="ml-[27px] flex"><Svg w={7} h={11}><path d="M6 0v11L0 5.500z" fill="#c0c0c0" /></Svg></span>
        <span className="ml-[22px] flex"><Svg w={7} h={11}><path d="M1 0v11l6-5.500z" fill="#c0c0c0" /></Svg></span>
        <span className="ml-[40px] w-px h-[25px] bg-[#ababab]" />
        <span className="w-[78px] text-center pb-[5px]">Sheet1</span>
        <span className="w-[67px] h-[26px] self-start flex items-center justify-center bg-white border-b-2 border-[#217346] text-[#217346] font-bold">NTTF</span>
        <span className="w-[77px] text-center pb-[5px]">Sheet3</span>
        <span className="w-px h-[25px] bg-[#ababab]" />
        <span className="ml-[33px] flex">
          <Svg w={20}><circle cx="10" cy="10" r="9" stroke="#777" strokeWidth="1.300" /><path d="M10 5v10M5 10h10" stroke="#777" strokeWidth="1.600" /></Svg>
        </span>
        <span className="ml-[769px] flex"><Svg w={3} h={14}><path d="M0 0h3v2H0zM0 6h3v2H0zM0 12h3v2H0z" fill="#aaa" /></Svg></span>
        <div className="ml-[15px] w-[725px] flex items-center h-[19px] bg-[#ebebeb]">
          <ScrollBtn d="M6.500 0v9L2 4.500z" />
          <div className="ml-[318px] w-[193px] h-[19px] bg-white border border-[#ababab]" />
          <ScrollBtn d="M2.500 0v9L7 4.500z" className="ml-auto" />
        </div>
      </div>

      {/* Status bar */}
      <div className="h-[27px] shrink-0 flex items-center bg-[#217346] text-white text-[12.5px]">
        <span className="ml-[8px]">READY</span>
        <div className="ml-auto flex items-center h-[27px]">
          <span className="w-[41px] h-[27px] bg-[#0a6332] flex items-center justify-center">
            <Svg w={14}><path d="M.5.5h13v13H.5zM4.800.5v13M9.200.5v13M.5 4.800h13M.5 9.200h13" stroke="#fff" /></Svg>
          </span>
          <span className="w-[41px] flex justify-center">
            <Svg w={14}><path d="M.5.5h13v13H.5z" stroke="#fff" /><path d="M3.500 3.500h7v7h-7zM5 6h4M5 8h4" stroke="#fff" /></Svg>
          </span>
          <span className="w-[43px] flex justify-center">
            <Svg w={14}><path d="M.5.5h13v13H.5z" stroke="#fff" /><path d="M.5 8.500h5V.5M9 .5v8h4.500" fill="#fff" stroke="#fff" /></Svg>
          </span>
          <span className="ml-[4px] w-[9px] h-[2px] bg-white" />
          <div className="ml-[4px] w-[125px] h-px bg-white flex items-center">
            <span className="ml-[62px] w-[4px] h-[16px] bg-white" />
          </div>
          <span className="ml-[4px] flex"><Svg w={11} h={11}><path d="M5.500 0v11M0 5.500h11" stroke="#fff" strokeWidth="2" /></Svg></span>
          <span className="ml-[17px] mr-[4px] w-[36px] text-[13px] opacity-90">102%</span>
        </div>
      </div>

      {/* Taskbar */}
      <div className="h-[60px] shrink-0 flex items-center bg-gradient-to-r from-[#d8e0e8] via-[#e3e3e2] to-[#d5dfe9] border-t border-[#c5cdd3] text-[#222]">
        <div className="relative ml-[27px] mt-[3px] flex">
          <SunIcon />
          <span className="absolute -top-[13px] left-[13px] w-[19px] h-[19px] rounded-full bg-[#c4241a] text-white text-[13px] font-bold flex items-center justify-center">1</span>
        </div>
        <div className="ml-[11px] flex flex-col text-[14px] leading-[21px] -mt-[2px]">
          <span>29°C</span>
          <span className="text-[#555]">Sunny</span>
        </div>
        <span className="ml-[453px] flex"><WinLogo /></span>
        <div className="ml-[17px] w-[273px] h-[38px] rounded-full bg-[#f5f8fa] border border-[#dfe3e6] flex items-center">
          <span className="ml-[14px] flex">
            <Svg w={18}><circle cx="7.500" cy="7.500" r="6" stroke="#222" strokeWidth="1.800" /><path d="M12 12l5 5" stroke="#222" strokeWidth="2" /></Svg>
          </span>
          <span className="ml-[13px] text-[17px] text-[#666]">Search</span>
          <span className="ml-auto mr-[3px] flex"><Squirrel /></span>
        </div>
        <span className="ml-[16px] flex"><TaskView /></span>
        <span className="ml-[25px] flex"><Copilot /></span>
        <span className="ml-[25px] flex"><Terminal /></span>
        <span className="ml-[31px] flex"><Notepad /></span>
        <span className="ml-[28px] flex"><Edge /></span>
        <span className="ml-[23px] flex"><Folder /></span>
        <span className="ml-[26px] flex"><Chrome /></span>
        <div className="ml-[25px] flex flex-col items-center relative">
          <Chrome />
          <span className="absolute -bottom-[8px] w-[8px] h-[3px] rounded-full bg-[#888]" />
        </div>
        <div className="ml-[18px] w-[44px] h-[50px] rounded-[5px] bg-[#eef1f4] border-r-[3px] border-[#e0e4e8] flex flex-col items-center justify-center relative">
          <ExcelLogo size={28} />
          <span className="absolute bottom-[1px] w-[19px] h-[3px] rounded-full bg-[#2a9fd8]" />
        </div>
        <span className="ml-[145px] flex"><Svg w={14} h={8}><path d="M1 7l6-6 6 6" stroke="#222" strokeWidth="1.600" /></Svg></span>
        <span className="ml-[22px] flex">
          <Svg w={22} h={18}><path d="M5 15.500a4 4 0 01-1-8 6.500 6.500 0 0112.500-1 4.500 4.500 0 011 9z" stroke="#222" strokeWidth="1.500" /><path d="M3 1l15 16" stroke="#222" strokeWidth="1.500" /></Svg>
        </span>
        <span className="ml-[23px] flex">
          <Svg w={14} h={24}><rect x="3.500" y="1" width="7" height="13" rx="3.500" stroke="#2b6fc2" strokeWidth="1.500" /><path d="M1 10c0 8 12 8 12 0M7 17v6" stroke="#2b6fc2" strokeWidth="1.500" /></Svg>
        </span>
        <div className="ml-[23px] w-[36px] flex flex-col items-center text-[14px] leading-[22px] -mt-[1px]">
          <span>ENG</span>
          <span>IN</span>
        </div>
        <span className="ml-[18px] flex">
          <Svg w={19} h={16}><path d="M1 5a12 12 0 0117 0" stroke="#bbb" strokeWidth="1.500" /><path d="M4 8.500a8 8 0 0111 0M7 12a4 4 0 015 0" stroke="#222" strokeWidth="1.500" /><circle cx="9.500" cy="14.500" r="1.300" fill="#222" /></Svg>
        </span>
        <span className="ml-[10px] flex">
          <Svg w={21} h={18}><path d="M1 6.500h3.500L9 2.500v13l-4.500-4H1z" stroke="#222" strokeWidth="1.300" /><path d="M12 6a4 4 0 010 6M15 3.500a8 8 0 010 11M18 1.500a11 11 0 010 15" stroke="#222" strokeWidth="1.300" /></Svg>
        </span>
        <span className="ml-[10px] flex">
          <Svg w={20} h={18}><rect x="1" y="4" width="16" height="12" rx="2" stroke="#222" strokeWidth="1.500" fill="#222" /><path d="M18 8v4" stroke="#222" strokeWidth="2" /><path d="M7 0L4 6h3l-2 5" stroke="#e5e5e5" strokeWidth="1.200" /></Svg>
        </span>
        <div className="ml-[22px] w-[78px] flex flex-col items-end text-[14px] leading-[22px] whitespace-nowrap -mt-[1px]">
          <span>01:04 PM</span>
          <span>21-01-2025</span>
        </div>
        <span className="ml-[11px] flex">
          <Svg w={18} h={20}><path d="M9 1a6 6 0 016 6v5l2 3H1l2-3V7a6 6 0 016-6z" fill="#222" /><path d="M7 17h4v1.500H7z" fill="#222" /><path d="M6 7h4l-4 4h4" stroke="#fff" strokeWidth="1" /></Svg>
        </span>
      </div>
    </div>
  );
}
